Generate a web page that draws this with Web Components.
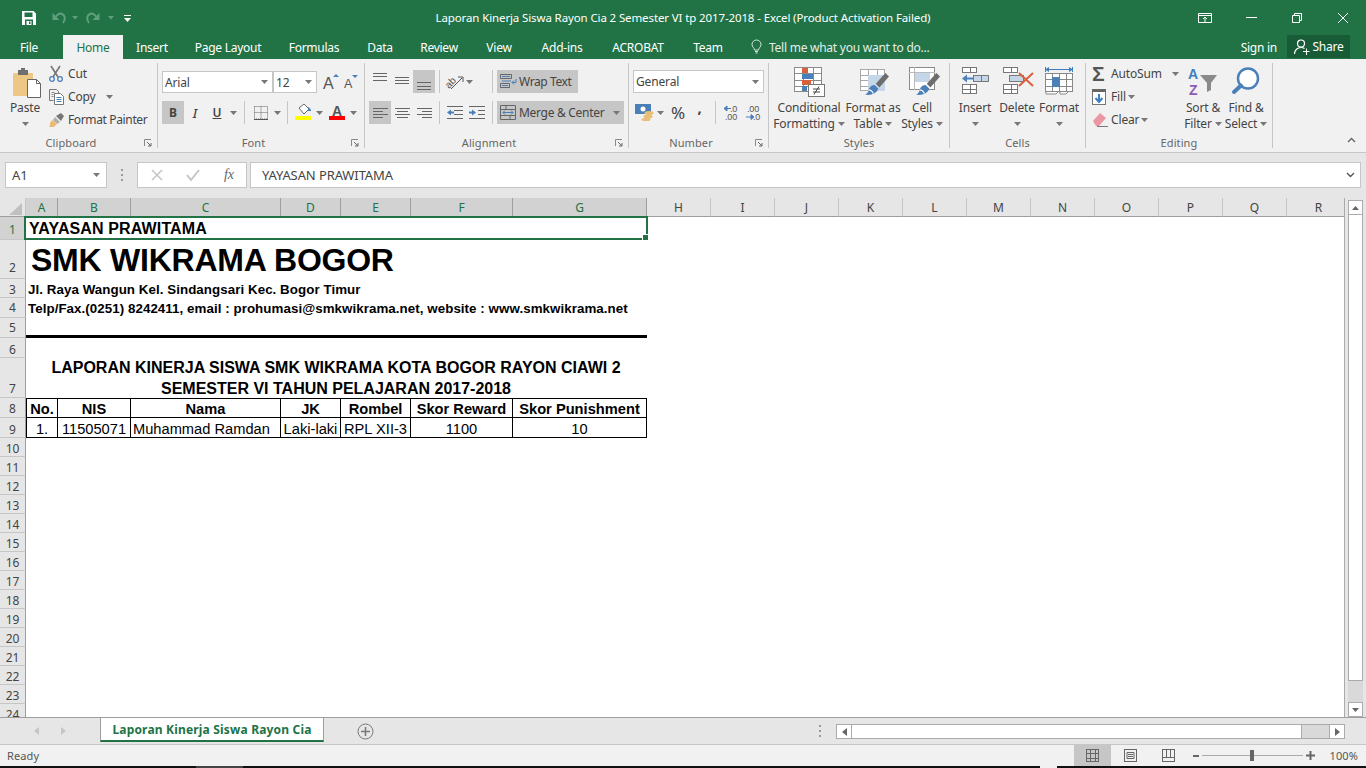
<!DOCTYPE html>
<html>
<head>
<meta charset="utf-8">
<title>Excel</title>
<style>
html,body{margin:0;padding:0;background:#e6e6e6;}
body{font-family:"Noto Sans",sans-serif;font-size:12px;color:#444;overflow:hidden;}
x-app{width:1366px;height:768px;}
</style>
</head>
<body>
<x-app>
  <x-titlebar title-text="Laporan Kinerja Siswa Rayon Cia 2 Semester VI tp 2017-2018 - Excel (Product Activation Failed)"></x-titlebar>
  <x-tabs></x-tabs>
  <x-ribbon>
    <x-group label="Clipboard" w="158" launcher>
      <x-large ico="paste" w="42" style="margin:3px 2px 0 4px" caret>Paste</x-large>
      <x-col style="margin-top:-1px">
        <x-small ico="cut">Cut</x-small>
        <x-small ico="copy" caret="10">Copy</x-small>
        <x-small ico="painter" style="letter-spacing:-.36px">Format Painter</x-small>
      </x-col>
    </x-group>

    <x-group label="Font" w="207" launcher>
      <x-col style="margin-left:4px">
        <x-row style="margin-top:8px;height:22px">
          <x-combo w="111" h="22">Arial</x-combo>
          <x-combo w="44" h="22">12</x-combo>
          <x-tool w="20" ico="growfont" style="margin-left:4px"></x-tool>
          <x-tool w="20" ico="shrinkfont"></x-tool>
        </x-row>
        <x-row style="margin-top:8px">
          <x-tool w="22" on><b>B</b></x-tool>
          <x-tool w="22"><i style="font-size:13px;font-weight:500">I</i></x-tool>
          <x-tool w="22"><u style="font-weight:600">U</u></x-tool>
          <x-tool w="10" ico="caret"></x-tool>
          <x-sep style="margin:0 5px 0 6px"></x-sep>
          <x-tool w="22" ico="borders"></x-tool>
          <x-tool w="10" ico="caret"></x-tool>
          <x-sep style="margin:0 4px 0 5px"></x-sep>
          <x-tool w="22" ico="fill"></x-tool>
          <x-tool w="10" ico="caret"></x-tool>
          <x-tool w="22" ico="fontcolor" style="margin-left:2px"></x-tool>
          <x-tool w="10" ico="caret"></x-tool>
        </x-row>
      </x-col>
    </x-group>

    <x-group label="Alignment" w="264" launcher>
      <x-col style="margin-left:4px">
        <x-row style="margin-top:7px">
          <x-tool w="22" ico="atop"></x-tool>
          <x-tool w="22" ico="amid"></x-tool>
          <x-tool w="22" ico="abot" on></x-tool>
          <x-sep style="margin:0 4px"></x-sep>
          <x-tool w="22" ico="orient"></x-tool>
          <x-tool w="7" ico="caret"></x-tool>
          <x-sep style="margin:0 4px 0 19px"></x-sep>
          <x-tool w="81" on ico="wrap" gap="1" style="letter-spacing:-.4px">Wrap Text</x-tool>
        </x-row>
        <x-row style="margin-top:8px">
          <x-tool w="22" ico="aleft" on></x-tool>
          <x-tool w="22" ico="acenter"></x-tool>
          <x-tool w="22" ico="aright"></x-tool>
          <x-sep style="margin:0 4px"></x-sep>
          <x-tool w="22" ico="outdent"></x-tool>
          <x-tool w="22" ico="indent"></x-tool>
          <x-sep style="margin:0 4px"></x-sep>
          <x-tool w="127" on ico="merge" gap="3" caret style="letter-spacing:-.3px">Merge &amp; Center</x-tool>
        </x-row>
      </x-col>
    </x-group>

    <x-group label="Number" w="140" launcher>
      <x-col style="margin-left:4px">
        <x-row style="margin-top:7px"><x-combo w="131" h="23">General</x-combo></x-row>
        <x-row style="margin-top:8px">
          <x-tool w="22" ico="currency" style="margin-left:1px"></x-tool>
          <x-tool w="8" ico="caret"></x-tool>
          <x-tool w="22" style="margin-left:3px;font-size:17px">%</x-tool>
          <x-tool w="21" style="font-size:15px;font-weight:700;padding-bottom:11px">,</x-tool>
          <x-sep style="margin:0 3px 0 5px"></x-sep>
          <x-tool w="22" ico="decinc"></x-tool>
          <x-tool w="22" ico="decdec"></x-tool>
        </x-row>
      </x-col>
    </x-group>

    <x-group label="Styles" w="181">
      <x-large ico="cf" w="68" style="margin:3px 0 0 6px" arrow="Formatting">Conditional</x-large>
      <x-large ico="fat" w="60" style="margin-top:3px" arrow="Table">Format as</x-large>
      <x-large ico="cs" w="38" style="margin-top:3px" arrow="Styles">Cell</x-large>
    </x-group>

    <x-group label="Cells" w="136">
      <x-large ico="ins" w="42" style="margin:3px 0 0 4px" caret>Insert</x-large>
      <x-large ico="del" w="42" style="margin-top:3px" caret>Delete</x-large>
      <x-large ico="fmt" w="42" style="margin-top:3px" caret>Format</x-large>
    </x-group>

    <x-group label="Editing" w="187">
      <x-col style="margin:-1px 0 0 5px;width:91px">
        <x-small ico="sigma" caret="10">AutoSum</x-small>
        <x-small ico="fillarrow" caret="2">Fill</x-small>
        <x-small ico="eraser" caret="2">Clear</x-small>
      </x-col>
      <x-large ico="sort" w="42" style="margin-top:3px" arrow="Filter">Sort &amp;</x-large>
      <x-large ico="find" w="42" style="margin:3px 0 0 1px" arrow="Select">Find &amp;</x-large>
    </x-group>
  </x-ribbon>
  <x-formula name="A1">YAYASAN PRAWITAMA</x-formula>
  <x-workspace>
    <x-sheet></x-sheet>
    <x-vscroll></x-vscroll>
  </x-workspace>
  <x-sheettabs>Laporan Kinerja Siswa Rayon Cia</x-sheettabs>
  <x-status>Ready</x-status>
</x-app>

<script>
// icons, drawn to the pixel size they have in the ribbon
const svg = (w, h, body) => `<svg width="${w}" height="${h}" viewBox="0 0 ${w} ${h}" xmlns="http://www.w3.org/2000/svg" style="display:block;overflow:visible">${body}</svg>`;
const lines = (rows, c) => rows.map(r => `<path d="M${r[0]} ${r[2]+.5}H${r[1]}" stroke="${c||'#666'}" fill="none"/>`).join('');
const grid = (x, y, w, h, cols, rws, c, fill) => {
  let s = `<rect x="${x+.5}" y="${y+.5}" width="${w-1}" height="${h-1}" fill="${fill||'#fff'}" stroke="${c}"/>`;
  for (let i = 1; i < cols; i++) { const X = Math.round(x + i * w / cols) + .5; s += `<path d="M${X} ${y}V${y+h}" stroke="${c}"/>`; }
  for (let i = 1; i < rws; i++) { const Y = Math.round(y + i * h / rws) + .5; s += `<path d="M${x} ${Y}H${x+w}" stroke="${c}"/>`; }
  return s;
};
const brush = (x, y) => `<g transform="translate(${x} ${y}) scale(1.2)"><path d="M17 0l3 3-8 9-3-3z" fill="#6d6d6d"/><path d="M8 10l3 3c-1 4-6 6-11 5 2-1 3-2 3-4 1-3 3-4 5-4z" fill="#4a7fb8"/><path d="M3 14c2 0 3 1 4 3" stroke="#fff" fill="none"/></g>`;
const ICONS = {
  save: svg(16,16,'<path fill="#fff" fill-rule="evenodd" d="M1 1h11.500L15 3.500V15H1zM3.500 2.500V7h8V2.500zM4 9.500V15h1.500v-4h5v4H12V9.500zM8 11.500h1.500V14H8z"/>'),
  undo: svg(17,16,'<path d="M4 8c2-4 5-5 7-4 3 1 4 5 1 9" fill="none" stroke="#5f9f7e" stroke-width="2"/><path d="M1.500 3v7h7z" fill="#5f9f7e"/>'),
  redo: svg(17,16,'<path d="M13 8c-2-4-5-5-7-4-3 1-4 5-1 9" fill="none" stroke="#5f9f7e" stroke-width="2"/><path d="M15.500 3v7h-7z" fill="#5f9f7e"/>'),
  qcaret: svg(7,7,'<path d="M0 .5h7" stroke="#fff"/><path d="M0 3h7L3.500 7z" fill="#fff"/>'),
  wcaret: svg(6,4,'<path d="M0 0h6L3 3.500z" fill="#5f9f7e"/>'),
  display: svg(14,10,'<path d="M.5.500h13v9H.500zM.5 2.500h13" fill="none" stroke="#fff"/><path d="M7 9V4M5 6l2-2 2 2" fill="none" stroke="#fff"/>'),
  min: svg(11,1,'<path d="M0 .5h11" stroke="#fff"/>'),
  restore: svg(10,10,'<path d="M.5 2.500h7v7h-7zM2.500 2.500v-2h7v7h-2" fill="none" stroke="#fff"/>'),
  close: svg(10,10,'<path d="M0 0l10 10M10 0L0 10" stroke="#fff" fill="none"/>'),
  bulb: svg(11,14,'<path d="M3.500 10c0-2-2.500-3-2.500-5.500a4.500 4.500 0 0 1 9 0C10 7 7.500 8 7.500 10zM4 11.500h3M4.500 13h2" fill="none" stroke="#d6e6dd"/>'),
  person: svg(16,16,'<circle cx="7" cy="4.500" r="3.500" fill="none" stroke="#fff" stroke-width="1.200"/><path d="M.5 15c0-4 3-6.500 6.500-6.500 1.500 0 2.500.3 3.500 1" fill="none" stroke="#fff" stroke-width="1.200"/><path d="M9 12.500h6.500M12.500 9.500v6.500" stroke="#fff" fill="none"/>'),
  caret: svg(7,4,'<path d="M0 0h7L3.500 4z" fill="#777"/>'),
  paste: svg(30,30,'<rect x="3" y="6" width="20" height="23" rx="1" fill="#eec785"/><path d="M8 8V3h3V1h4v2h3v5z" fill="#6f6f6f"/><path d="M17.500 12.500h9l4 4v14h-13z" fill="#fff" stroke="#666"/><path d="M26.500 12.500v4h4" fill="none" stroke="#666"/>'),
  cut: svg(15,16,'<path d="M2 0l7 11M11 0L4 11" stroke="#777" stroke-width="1.600" fill="none"/><circle cx="3" cy="13" r="2.300" fill="none" stroke="#4a7fb8" stroke-width="1.300"/><circle cx="11" cy="13" r="2.300" fill="none" stroke="#4a7fb8" stroke-width="1.300"/>'),
  copy: svg(16,16,'<path d="M.5.500h7l2 2v2M.5.500v11h4" fill="none" stroke="#777"/><path d="M5.500 4.500h6l3 3v8h-9z" fill="#fff" stroke="#777"/><path d="M7.500 8.500h5M7.500 10.500h5M7.500 12.500h5" stroke="#4a7fb8"/><path d="M2.500 3.500h3M2.500 5.500h2M2.500 7.500h2" stroke="#888"/>'),
  painter: svg(16,14,'<path d="M7 3l5-3 3 3-3 5z" fill="#777"/><path d="M6 4l5 5-3 2-4-4z" fill="#b0b0b0"/><path d="M4 7l4 4-3 3H0c1-1 1-2 1-3 0-2 1-3 3-4z" fill="#e9bd74"/>'),
  growfont: svg(17,17,'<text x="0" y="15" font-family="Liberation Sans,sans-serif" font-size="16" fill="#555">A</text><path d="M10 3l3-3 3 3z" fill="#4a7fb8"/>'),
  shrinkfont: svg(14,14,'<text x="0" y="13" font-family="Liberation Sans,sans-serif" font-size="12.500" fill="#555">A</text><path d="M8 0h6l-3 3z" fill="#4a7fb8"/>'),
  borders: svg(14,14,'<path d="M.5.500h13v12.500H.500zM7 .5V13M.5 6.500h13" fill="none" stroke="#666" stroke-dasharray="1 1"/><path d="M0 13.500h14" stroke="#555"/>'),
  fill: svg(17,17,'<path d="M4 4l5-4 5 5-5 5z" fill="#fff" stroke="#666"/><path d="M13 3c2 1 3 2 3 4h-3z" fill="#4a7fb8"/><rect x="0" y="12" width="16" height="4" fill="#ffff00"/>'),
  fontcolor: svg(17,17,'<text x="3" y="11.500" font-family="Liberation Sans,sans-serif" font-weight="700" font-size="14" fill="#555">A</text><rect x="0" y="12" width="16" height="4" fill="#ff0000"/>'),
  atop: svg(14,23,lines([[0,14,3],[0,14,6],[0,14,10]])),
  amid: svg(14,23,lines([[0,14,7],[0,14,10],[0,14,13]])),
  abot: svg(14,23,lines([[0,14,12],[0,14,16],[0,14,19]])),
  aleft: svg(15,10,lines([[0,15,0],[0,10,3],[0,15,6],[0,10,9]])),
  acenter: svg(15,10,lines([[0,15,0],[2,13,3],[0,15,6],[2,13,9]])),
  aright: svg(15,10,lines([[0,15,0],[5,15,3],[0,15,6],[5,15,9]])),
  orient: svg(18,16,'<text x="0" y="12" transform="rotate(-45 5 10)" font-family="Liberation Sans,sans-serif" font-size="10" fill="#555">ab</text><path d="M5 15L16 4M12 3h5v5" fill="none" stroke="#555"/>'),
  wrap: svg(18,15,'<path d="M.5.500h11v4H.500zM.5 9.500h9v4h-9z" fill="none" stroke="#666"/><path d="M2 2.500h8M2 7h9M2 11.500h6" stroke="#4a7fb8"/><path d="M16 5v3.500h-4M14 6.500l-2 2 2 2" fill="none" stroke="#4a7fb8"/>'),
  merge: svg(16,15,'<path d="M.5.500h15v14H.500zM.5 4.500h15M.5 10.500h15M6 .5v4M10 10.500v4" fill="none" stroke="#666"/><path d="M3 7.500h10M5 5.500l-2 2 2 2M11 5.500l2 2-2 2" fill="none" stroke="#4a7fb8"/>'),
  outdent: svg(16,14,'<path d="M0 .5h16M7 4.500h9M7 8.500h9M0 12.500h16" stroke="#666"/><path d="M0 6.500l4-3v2h3v2H4v2z" fill="#4a7fb8"/>'),
  indent: svg(16,14,'<path d="M0 .5h16M9 4.500h7M9 8.500h7M0 12.500h16" stroke="#666"/><path d="M7 6.500l-4-3v2H0v2h3v2z" fill="#4a7fb8"/>'),
  currency: svg(20,17,'<rect x="0" y="0" width="16" height="10" fill="#4a7fb8"/><circle cx="8" cy="5" r="2.500" fill="#fff"/><ellipse cx="14" cy="9" rx="4.500" ry="2" fill="#e9bd74"/><ellipse cx="13" cy="12.500" rx="4.500" ry="2" fill="#e9bd74"/><ellipse cx="11" cy="15.500" rx="4.500" ry="1.500" fill="#e9bd74"/>'),
  decinc: svg(17,16,'<path d="M9 3.500H3M5 1L2 3.500 5 6z" fill="#4a7fb8" stroke="#4a7fb8"/><text x="8" y="7" font-family="Liberation Sans,sans-serif" font-size="9" fill="#555">.0</text><text x="3" y="15" font-family="Liberation Sans,sans-serif" font-size="9" fill="#555">.00</text>'),
  decdec: svg(17,16,'<text x="3" y="7" font-family="Liberation Sans,sans-serif" font-size="9" fill="#555">.00</text><path d="M2 12h7M7 9.500l3 2.500-3 2.500z" fill="#4a7fb8" stroke="#4a7fb8"/><text x="9" y="15" font-family="Liberation Sans,sans-serif" font-size="9" fill="#555">.0</text>'),
  cf: svg(32,30,grid(1,0,28,25,3,4,'#8a8a8a')+'<rect x="9" y="1" width="6" height="5" fill="#d9603b"/><rect x="9" y="7" width="11" height="5" fill="#4a7fb8"/><rect x="9" y="13" width="9" height="5" fill="#d9603b"/><rect x="9" y="19" width="5" height="5" fill="#4a7fb8"/><rect x="15.500" y="17.500" width="16" height="12" fill="#fff" stroke="#777"/><path d="M20 22h7M20 25h7M26 19.500l-5 8" stroke="#444" fill="none"/>'),
  fat: svg(32,30,grid(3,2,25,22,3,4,'#a8a8a8','#fff')+'<rect x="11" y="8" width="17" height="16" fill="#c5d6e9"/>'+brush(8,6)),
  cs: svg(32,30,'<rect x="3.500" y=".5" width="25" height="22" fill="#fff" stroke="#8a8a8a"/><rect x="9" y="6" width="15" height="9" fill="#c5d6e9"/><path d="M3 5.500h26M8.500 0v23" stroke="#bbb"/>'+brush(10,6)),
  ins: svg(27,27,grid(0,0,15,6,2,1,'#777')+'<path d="M4 11.500h8" stroke="#4a7fb8" stroke-width="2"/><path d="M0 11.500l5-4v8z" fill="#4a7fb8"/><rect x="11.500" y="8.500" width="15" height="6" fill="#c5d6e9" stroke="#777"/><path d="M19.500 8v6" stroke="#777"/>'+grid(0,17,15,10,2,2,'#777')),
  del: svg(33,27,grid(2,0,15,6,2,1,'#777')+'<rect x="8.500" y="8.500" width="14" height="6" fill="#c5d6e9" stroke="#777"/>'+grid(2,17,15,10,2,2,'#777')+'<path d="M18 6l14 13M32 6L18 19" stroke="#d9603b" stroke-width="2" fill="none"/>'),
  fmt: svg(30,30,'<path d="M1 2.500h28M1.500 0v5M28.500 0v5" stroke="#3f7ebd"/><path d="M1 2.500l4-2.500v5zM29 2.500l-4-2.500v5z" fill="#3f7ebd"/>'+grid(1,6,28,19,4,3,'#888')+'<rect x="8" y="10" width="8" height="10" fill="#4a7fb8"/><path d="M2 25v2h10l2-2M16 25v2h6l2-2" fill="#fff" stroke="#888"/>'),
  sigma: `<span style="font:700 21px/16px 'Liberation Sans',sans-serif;color:#555;display:block;width:16px;height:16px">Σ</span>`,
  fillarrow: svg(14,16,'<rect x=".5" y=".5" width="13" height="15" fill="#fff" stroke="#777"/><rect x="0" y="0" width="14" height="3" fill="#666"/><path d="M7 5v8M3.500 9L7 13l3.500-4" stroke="#3f7ebd" stroke-width="2" fill="none"/>'),
  eraser: svg(16,15,'<path d="M1 9l7-8 6 5-7 8H4z" fill="#ea97a3"/><path d="M5 14.500h11" stroke="#777"/>'),
  sort: svg(31,29,'<text x="0" y="12" font-family="Liberation Sans,sans-serif" font-weight="700" font-size="14" fill="#3f7ebd">A</text><text x="1" y="28" font-family="Liberation Sans,sans-serif" font-weight="700" font-size="14" fill="#8e5bb5">Z</text><path d="M12 8h17l-6 8v7l-4 2v-9z" fill="#8a8a8a"/>'),
  find: svg(30,28,'<circle cx="17" cy="11.500" r="10" fill="#fff" stroke="#4a7fb8" stroke-width="2.400"/><path d="M10 18.500L3 25" stroke="#4a7fb8" stroke-width="4" stroke-linecap="round"/>'),
  launch: svg(8,8,'<path d="M.5 7V.5H7" fill="none" stroke="#888"/><path d="M3 3l4 4M7 4v3H4" fill="none" stroke="#666"/>'),
  chevron: svg(9,6,'<path d="M1 1l3.500 3.500L8 1" fill="none" stroke="#555" stroke-width="1.400"/>'),
  x: svg(12,12,'<path d="M1 1l10 10M11 1L1 11" stroke="#c6c6c6" stroke-width="1.600" fill="none"/>'),
  check: svg(14,12,'<path d="M1 6l4 5 8-10" stroke="#c6c6c6" stroke-width="2" fill="none"/>'),
  plus: svg(17,17,'<circle cx="8.500" cy="8.500" r="7.500" fill="none" stroke="#777"/><path d="M4 8.500h9M8.500 4v9" stroke="#777" stroke-width="1.500"/>'),
  viewnormal: svg(13,13,grid(0,0,13,13,3,3,'#666','none')),
  viewpage: svg(13,13,'<rect x=".5" y=".5" width="12" height="12" fill="none" stroke="#666"/><path d="M3 3.500h7v6H3zM4 5.500h5M4 7.500h5" fill="none" stroke="#666"/>'),
  viewbreak: svg(13,13,'<rect x=".5" y=".5" width="12" height="12" fill="none" stroke="#666"/><path d="M.5 8.500h12M4.500 .5v8M8.500 .5v8" fill="none" stroke="#666"/>')
};

// registers a shadow component whose markup is rebuilt once on connect
function comp(name, css, html, extra) {
  customElements.define(name, class extends HTMLElement {
    connectedCallback() {
      if (this.shadowRoot) return;
      const root = this.attachShadow({ mode: 'open' });
      root.innerHTML = `<style>${css}</style>` + (typeof html === 'function' ? html(this) : html);
      if (extra) extra(this, root);
    }
  });
}
const attr = (el, n, d) => el.hasAttribute(n) ? el.getAttribute(n) : d;

comp('x-app', ':host{display:flex;flex-direction:column;overflow:hidden}', '<slot></slot>');

comp('x-titlebar', `
  :host{display:grid;grid-template-columns:1fr auto 1fr;align-items:center;height:35px;background:#217346;color:#fff;flex:none}
  .q{display:flex;align-items:center;padding-left:21px}
  .t{font-size:11.5px;letter-spacing:-.12px;white-space:nowrap;margin-top:-1px}
  .w{display:flex;justify-content:flex-end;height:30px;align-items:center}
  .w span{width:46px;display:flex;justify-content:center}
`, el => `
  <div class="q">${ICONS.save}
    <span style="margin-left:14px">${ICONS.undo}</span><span style="margin-left:4px">${ICONS.wcaret}</span>
    <span style="margin-left:6px">${ICONS.redo}</span><span style="margin-left:7px">${ICONS.wcaret}</span>
    <span style="margin-left:10px;margin-top:2px">${ICONS.qcaret}</span></div>
  <div class="t">${attr(el,'title-text','')}</div>
  <div class="w"><span>${ICONS.display}</span><span>${ICONS.min}</span><span>${ICONS.restore}</span><span>${ICONS.close}</span></div>
`);

comp('x-tabs', `
  :host{display:flex;height:24px;background:#217346;color:#fff;flex:none;align-items:stretch;letter-spacing:-.25px}
  .tab{display:flex;align-items:center;justify-content:center;font-size:12px}
  .on{background:#f1f1f1;color:#217346}
  .tell{display:flex;align-items:center;gap:7px;margin-left:14px;color:#e3eee8;font-size:12px}
  .right{margin-left:auto;display:flex;align-items:center;margin-right:16px}
  .share{display:flex;align-items:center;gap:3px;background:#185c37;width:63px;height:23px;justify-content:center;margin-left:10px;margin-top:-1px}
`, () => {
  const tabs = [['File',58],['Home',60,1],['Insert',58],['Page Layout',94],['Formulas',78],['Data',54],['Review',64],['View',56],['Add-ins',70],['ACROBAT',82],['Team',58]];
  return tabs.map((t, i) => `<div class="tab${t[2] ? ' on' : ''}" style="width:${t[1]}px${i === 1 ? ';margin-left:5px' : ''}">${t[0]}</div>`).join('') +
    `<div class="tell">${ICONS.bulb}<span>Tell me what you want to do...</span></div>
     <div class="right"><span>Sign in</span><div class="share">${ICONS.person}<span>Share</span></div></div>`;
});

comp('x-ribbon', `
  :host{display:flex;height:93px;background:#f1f1f1;border-bottom:1px solid #c6c6c6;flex:none;position:relative;box-sizing:content-box}
  .up{position:absolute;right:10px;bottom:5px}
`, `<slot></slot><div class="up"><svg width="9" height="6" viewBox="0 0 9 6"><path d="M1 5l3.500-3.500L8 5" fill="none" stroke="#666" stroke-width="1.400"/></svg></div>`);

comp('x-group', `
  :host{display:flex;flex-direction:column;height:85px;margin-top:4px;border-right:1px solid #c6c6c6;box-sizing:border-box;position:relative;flex:none}
  .c{display:flex;height:72px;flex:none}
  .l{height:16px;line-height:16px;text-align:center;color:#666;font-size:11px;letter-spacing:.1px;flex:none}
  :host([launcher]) .l{padding-right:15px}
  .m{position:absolute;right:5px;bottom:1px}
`, el => `<div class="c"><slot></slot></div><div class="l">${attr(el,'label','')}</div>` + (el.hasAttribute('launcher') ? `<div class="m">${ICONS.launch}</div>` : ''),
  el => { el.style.width = attr(el, 'w', 100) + 'px'; });

comp('x-col', ':host{display:flex;flex-direction:column;flex:none}', '<slot></slot>');
comp('x-row', ':host{display:flex;align-items:center;height:23px;flex:none}', '<slot></slot>');
comp('x-sep', ':host{display:block;width:1px;height:23px;background:#c6c6c6;flex:none}', '');

comp('x-large', `
  :host{display:flex;flex-direction:column;align-items:center;flex:none;color:#444;font-size:12px;letter-spacing:-.15px;white-space:nowrap}
  .i{height:34px;box-sizing:border-box;padding-top:1px;display:flex;align-items:flex-start;justify-content:center;width:100%;flex:none}
  .ln{height:16px;line-height:16px;display:flex;align-items:center;gap:3px;justify-content:center;flex:none}
`, el => {
  const a = attr(el, 'arrow', null);
  return `<div class="i">${ICONS[attr(el,'ico','')] || ''}</div>
    <div class="ln"><slot></slot></div>
    ${a ? `<div class="ln">${a}${ICONS.caret}</div>` : ''}
    ${el.hasAttribute('caret') ? `<div class="ln">${ICONS.caret}</div>` : ''}`;
}, el => { el.style.width = attr(el, 'w', 42) + 'px'; });

comp('x-small', `
  :host{display:flex;align-items:center;height:23px;color:#444;font-size:12px;letter-spacing:-.15px;white-space:nowrap}
  .i{width:19px;display:flex;margin-right:1px;justify-content:flex-start;padding-left:1px;box-sizing:border-box}
  .k{display:inline-flex}
`, el => `<div class="i">${ICONS[attr(el,'ico','')] || ''}</div><slot></slot>` +
  (el.hasAttribute('caret') ? `<span class="k" style="margin-left:${attr(el,'caret',0)}px">${ICONS.caret}</span>` : ''));

comp('x-tool', `
  :host{display:flex;align-items:center;justify-content:center;height:23px;flex:none;color:#444;font-size:12px;letter-spacing:-.15px;white-space:nowrap;box-sizing:border-box}
  :host([on]){background:#c6c6c6}
  :host([gap]){justify-content:flex-start;padding-left:3px}
  .k{margin-left:auto;margin-right:4px}
`, el => `${ICONS[attr(el,'ico','')] || ''}${el.hasAttribute('gap') ? `<span style="width:${attr(el,'gap',0)}px"></span>` : ''}<slot></slot>` +
  (el.hasAttribute('caret') ? `<span class="k">${ICONS.caret}</span>` : ''),
  el => { el.style.width = attr(el, 'w', 22) + 'px'; });

comp('x-combo', `
  :host{display:flex;align-items:center;background:#fff;border:1px solid #c6c6c6;box-sizing:border-box;padding:0 4px 0 2px;color:#444;font-size:12px;letter-spacing:-.15px;flex:none}
  .k{margin-left:auto}
`, `<slot></slot><span class="k">${ICONS.caret}</span>`, el => { el.style.width = attr(el,'w',60)+'px'; el.style.height = attr(el,'h',22)+'px'; });

comp('x-formula', `
  :host{display:flex;align-items:center;height:45px;background:#e6e6e6;flex:none;padding:0 5px 1px;box-sizing:border-box;color:#444}
  .box{height:26px;background:#fff;border:1px solid #c6c6c6;box-sizing:border-box;display:flex;align-items:center}
  .name{width:102px;padding:0 6px;font-size:13px;justify-content:space-between}
  .dots{width:30px;display:flex;justify-content:center}
  .btns{width:110px;justify-content:space-between;padding:0 11px 0 13px;font-size:0}
  .fx{font:italic 14px "Liberation Serif",serif;color:#666;margin-right:1px}
  .bar{flex:1;margin-left:3px;padding:0 5px 0 11px;font-size:13px;letter-spacing:-.1px;justify-content:space-between}
`, el => `
  <div class="box name"><span>${attr(el,'name','')}</span>${ICONS.caret}</div>
  <div class="dots"><svg width="2" height="12"><path d="M0 1h2M0 6h2M0 11h2" stroke="#999" stroke-width="2"/></svg></div>
  <div class="box btns">${ICONS.x}${ICONS.check}<span class="fx">fx</span></div>
  <div class="box bar"><span><slot></slot></span>${ICONS.chevron}</div>
`);

comp('x-workspace', ':host{display:flex;height:519px;flex:none;background:#e6e6e6}', '<slot></slot>');

const COLS = [['A',32],['B',73],['C',150],['D',60],['E',70],['F',102],['G',134],['H',64],['I',64],['J',64],['K',64],['L',64],['M',64],['N',64],['O',64],['P',64],['Q',64],['R',64]];
const ROWS = [23,39,19,20,20,20,40,20,20];
const RH_PAD = [2,3,0,2,2,0,1,1,0];
for (let i = 10; i <= 24; i++) ROWS.push(19);

comp('x-sheet', `
  :host{display:block;width:1345px;height:519px;overflow:hidden;position:relative;background:#fff;flex:none;box-sizing:border-box;border-right:1px solid #ababab}
  .g{display:grid;grid-template-columns:26px ${COLS.map(c => c[1] + 'px').join(' ')};grid-template-rows:19px ${ROWS.map(r => r + 'px').join(' ')};font-family:"Liberation Sans",Arial,sans-serif;color:#000}
  .corner{background:#e6e6e6;border-right:1px solid #c6c6c6;border-bottom:1px solid #9e9e9e;box-sizing:border-box;position:relative}
  .corner svg{position:absolute;left:9px;top:5px}
  .ch,.rh{font:12px "Noto Sans",sans-serif;color:#444;box-sizing:border-box;background:#e6e6e6;display:flex;justify-content:center}
  .ch{border-right:1px solid #c6c6c6;border-bottom:1px solid #9e9e9e;align-items:center;padding-top:1px}
  .rh{border-right:1px solid #9e9e9e;border-bottom:1px solid #c6c6c6;align-items:flex-end;line-height:14px}
  .sel{background:#d2d2d2;color:#217346;border-right-color:#9e9e9e}
  .rh.sel{color:#217346}
  .c{box-sizing:border-box;white-space:nowrap;display:flex;align-items:flex-end;padding:0 1px 0 2px;overflow:visible}
  .b{border-right:1px solid #000;border-bottom:1px solid #000}
  .ctr{justify-content:center;padding:0}
  .h{font-weight:700;font-size:14.67px;align-items:center;padding-top:2px}
  .d{font-size:14.67px;align-items:center;padding-top:2px}
  .hilite{position:absolute;left:24px;top:18px;width:624px;height:24px;border:2px solid #217346;box-sizing:border-box;pointer-events:none}
  .hilite i{position:absolute;right:-3px;bottom:-3px;width:7px;height:7px;box-sizing:border-box;background:#217346;border:1px solid #fff}
`, () => {
  let s = `<div class="g"><div class="corner"><svg width="13" height="12"><path d="M13 0v12H0z" fill="#c0c0c0"/></svg></div>`;
  COLS.forEach((c, i) => { s += `<div class="ch${i < 7 ? ' sel' : ''}">${c[0]}</div>`; });
  const span = 'grid-column:2 / span 7';
  const tr = ['No.','NIS','Nama','JK','Rombel','Skor Reward','Skor Punishment'];
  const td = ['1.','11505071','Muhammad Ramdan','Laki-laki','RPL XII-3','1100','10'];
  ROWS.forEach((r, i) => {
    const n = i + 1;
    s += `<div class="rh${n === 1 ? ' sel' : ''}" style="grid-row:${n + 1};grid-column:1;padding-bottom:${RH_PAD[i] || 0}px">${n}</div>`;
    const at = `grid-row:${n + 1};`;
    if (n === 1) s += `<div class="c" style="${at}${span};font:700 16px 'Liberation Sans',sans-serif;letter-spacing:.13px;align-items:center;padding-left:3px">YAYASAN PRAWITAMA</div>`;
    if (n === 2) s += `<div class="c" style="${at}${span};font:700 32px 'Liberation Sans',sans-serif;letter-spacing:-.24px;align-items:center;padding:2px 0 0 5px">SMK WIKRAMA BOGOR</div>`;
    if (n === 3) s += `<div class="c" style="${at}${span};font:700 13.33px 'Liberation Sans',sans-serif;letter-spacing:.06px;align-items:center;padding-top:2px">Jl. Raya Wangun Kel. Sindangsari Kec. Bogor Timur</div>`;
    if (n === 4) s += `<div class="c" style="${at}${span};font:700 13.33px 'Liberation Sans',sans-serif;letter-spacing:.06px;align-items:center">Telp/Fax.(0251) 8242411, email : prohumasi@smkwikrama.net, website : www.smkwikrama.net</div>`;
    if (n === 5) s += `<div class="c" style="${at}${span};border-bottom:3px solid #000"></div>`;
    if (n === 7) s += `<div class="c ctr" style="${at}${span};font:700 16px/21px 'Liberation Sans',sans-serif;text-align:center;white-space:normal;align-items:flex-start;margin:-1px 1px 0 0">LAPORAN KINERJA SISWA SMK WIKRAMA KOTA BOGOR RAYON CIAWI 2<br>SEMESTER VI TAHUN PELAJARAN 2017-2018</div>`;
    if (n === 8) tr.forEach((t, k) => { s += `<div class="c b ctr h" style="${at}grid-column:${k + 2};border-top:1px solid #000${k === 0 ? ';border-left:1px solid #000' : ''}">${t}</div>`; });
    if (n === 9) td.forEach((t, k) => { s += `<div class="c b d${k === 2 ? '' : ' ctr'}" style="${at}grid-column:${k + 2}${k === 0 ? ';border-left:1px solid #000' : ''}">${t}</div>`; });
  });
  return s + `</div><div class="hilite"><i></i></div>`;
});

comp('x-vscroll', `
  :host{display:flex;flex-direction:column;width:21px;height:519px;padding:2px 3px 0 3px;box-sizing:border-box;background:#e6e6e6;flex:none}
  .a{height:15px;background:#fff;border:1px solid #ababab;box-sizing:border-box;display:flex;align-items:center;justify-content:center;flex:none}
  .t{height:466px;background:#fff;border:1px solid #ababab;border-top:0;box-sizing:border-box;flex:none}
  .tr{flex:1;background:#d9d9d9}
`, `<div class="a"><svg width="7" height="4"><path d="M3.500 0L7 4H0z" fill="#666"/></svg></div><div class="t"></div><div class="tr"></div><div class="a"><svg width="7" height="4"><path d="M0 0h7L3.500 4z" fill="#666"/></svg></div>`);

comp('x-sheettabs', `
  :host{display:flex;align-items:stretch;height:28px;background:#e6e6e6;border-top:1px solid #9e9e9e;border-bottom:1px solid #c6c6c6;box-sizing:border-box;flex:none}
  .nav{width:100px;display:flex;align-items:center;justify-content:center;gap:22px;box-sizing:border-box}
  .tab{width:224px;margin-top:-1px;height:25px;background:#fff;box-sizing:border-box;border:1px solid #9e9e9e;border-bottom:2px solid #217346;color:#217346;font-weight:700;font-size:12px;letter-spacing:.18px;display:flex;align-items:center;justify-content:center}
  .p{width:82px;display:flex;align-items:center;justify-content:center}
  .dots{margin-left:413px;display:flex;align-items:center;width:12px}
  .bar{margin-top:6px;height:15px;width:509px;display:flex;background:#d9d9d9;box-sizing:border-box;border:1px solid #ababab;margin-left:5px;align-items:stretch}
  .ar{width:14px;background:#fff;display:flex;align-items:center;justify-content:center;flex:none}
  .th{width:449px;background:#fff;border-left:1px solid #ababab;border-right:1px solid #ababab;flex:none}
  .sp{flex:1}
`, `
  <div class="nav"><svg width="5" height="8"><path d="M5 0v8L0 4z" fill="#c6c6c6"/></svg><svg width="5" height="8"><path d="M0 0v8l5-4z" fill="#c6c6c6"/></svg></div>
  <div class="tab"><slot></slot></div>
  <div class="p">${ICONS.plus}</div>
  <div class="dots"><svg width="2" height="12"><path d="M0 1h2M0 6h2M0 11h2" stroke="#999" stroke-width="2"/></svg></div>
  <div class="bar"><div class="ar"><svg width="5" height="8"><path d="M5 0v8L0 4z" fill="#666"/></svg></div><div class="th"></div><div class="sp"></div><div class="ar" style="border-left:1px solid #ababab"><svg width="5" height="8"><path d="M0 0v8l5-4z" fill="#666"/></svg></div></div>
`);

comp('x-status', `
  :host{display:flex;flex-direction:column;height:23px;flex:none;background:#f1f1f1}
  .m{display:flex;align-items:center;height:21px;padding-left:7px;color:#555;font-size:11px;letter-spacing:.1px}
  .v{margin-left:auto;display:flex;align-items:center;height:100%}
  .b{width:37px;height:21px;display:flex;align-items:center;justify-content:center;margin-right:1px}
  .on{background:#c6c6c6}
  .s{display:flex;align-items:center;position:relative;width:101px;height:1px;background:#ababab;margin:0 3px 0 1px}
  .s i{position:absolute;left:48px;top:-5px;width:4px;height:11px;background:#666}
  .z{width:51px;text-align:right;padding-right:8px;box-sizing:border-box;color:#555}
  .strip{height:2px;background:linear-gradient(90deg,#111 196px,#444 196px,#444 243px,#111 243px,#111 1040px,#f1f1f1 1040px,#f1f1f1 1057px,#111 1057px)}
`, `
  <div class="m"><slot></slot><div class="v">
    <div class="b on">${ICONS.viewnormal}</div><div class="b">${ICONS.viewpage}</div><div class="b">${ICONS.viewbreak}</div>
    <svg width="8" height="2" style="margin-left:5px"><rect width="6" height="2" fill="#666"/></svg>
    <div class="s"><i></i></div>
    <svg width="9" height="9"><path d="M0 4.500h9M4.500 0v9" stroke="#666" stroke-width="2"/></svg>
    <div class="z">100%</div>
  </div></div>
  <div class="strip"></div>
`);
</script>
</body>
</html>
